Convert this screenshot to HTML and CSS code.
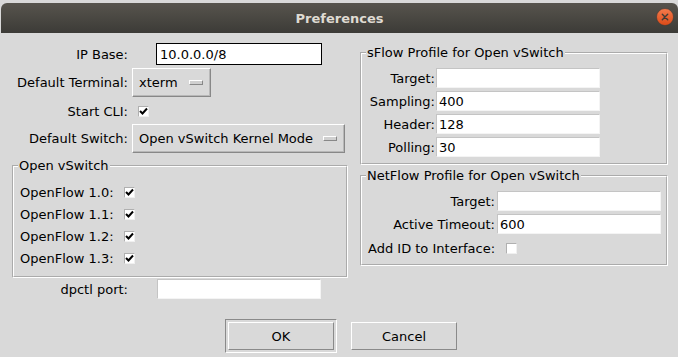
FILE: index.html
```html
<!DOCTYPE html>
<html lang="en">
<head>
    <meta charset="UTF-8">
    <meta name="viewport" content="width=device-width, initial-scale=1.0">
    <title>Preferences</title>
    <link rel="stylesheet" href="styles.css">
</head>
<body>
    <div class="window">
        <div class="titlebar">
            <span class="title">Preferences</span>
            <span class="close">
                <svg width="18" height="18" viewBox="0 0 18 18">
                    <defs>
                        <linearGradient id="closeFill" x1="0" y1="0" x2="0" y2="1">
                            <stop offset="0" stop-color="#f37b4d"/>
                            <stop offset="1" stop-color="#dc4a17"/>
                        </linearGradient>
                    </defs>
                    <circle cx="9" cy="9" r="8.5" fill="url(#closeFill)" stroke="#3a3935" stroke-width="0.6"/>
                    <path d="M6.3 6.3 L11.7 11.7 M11.7 6.3 L6.3 11.7" stroke="#3c3b37" stroke-width="1.4" stroke-linecap="round"/>
                </svg>
            </span>
        </div>

        <div class="dialog">
            <div class="columns">
                <div class="left">
                    <div class="form-grid">
                        <label class="lbl" for="ipBase">IP Base:</label>
                        <input class="entry focus" id="ipBase" type="text" value="10.0.0.0/8">

                        <span class="lbl">Default Terminal:</span>
                        <div class="menubutton short"><span>xterm</span><i class="indicator"></i></div>

                        <span class="lbl">Start CLI:</span>
                        <span class="check cli"><svg width="9" height="9" viewBox="0 0 9 9"><path d="M1 4 L3.5 6.5 L8 1.5" fill="none" stroke="#000" stroke-width="2"/></svg></span>

                        <span class="lbl">Default Switch:</span>
                        <div class="menubutton wide"><span>Open vSwitch Kernel Mode</span><i class="indicator"></i></div>

                        <fieldset class="group ovs">
                            <legend>Open vSwitch</legend>
                            <div class="ovs-grid">
                                <span>OpenFlow 1.0:</span>
                                <span class="check"><svg width="9" height="9" viewBox="0 0 9 9"><path d="M1 4 L3.5 6.5 L8 1.5" fill="none" stroke="#000" stroke-width="2"/></svg></span>
                                <span>OpenFlow 1.1:</span>
                                <span class="check"><svg width="9" height="9" viewBox="0 0 9 9"><path d="M1 4 L3.5 6.5 L8 1.5" fill="none" stroke="#000" stroke-width="2"/></svg></span>
                                <span>OpenFlow 1.2:</span>
                                <span class="check"><svg width="9" height="9" viewBox="0 0 9 9"><path d="M1 4 L3.5 6.5 L8 1.5" fill="none" stroke="#000" stroke-width="2"/></svg></span>
                                <span>OpenFlow 1.3:</span>
                                <span class="check"><svg width="9" height="9" viewBox="0 0 9 9"><path d="M1 4 L3.5 6.5 L8 1.5" fill="none" stroke="#000" stroke-width="2"/></svg></span>
                            </div>
                        </fieldset>

                        <label class="lbl" for="dpctl">dpctl port:</label>
                        <input class="entry" id="dpctl" type="text" value="">
                    </div>
                </div>

                <div class="right">
                    <fieldset class="group sflow">
                        <legend>sFlow Profile for Open vSwitch</legend>
                        <div class="sflow-grid">
                            <span class="lbl">Target:</span><input class="entry" type="text" value="">
                            <span class="lbl">Sampling:</span><input class="entry" type="text" value="400">
                            <span class="lbl">Header:</span><input class="entry" type="text" value="128">
                            <span class="lbl">Polling:</span><input class="entry" type="text" value="30">
                        </div>
                    </fieldset>

                    <fieldset class="group netflow">
                        <legend>NetFlow Profile for Open vSwitch</legend>
                        <div class="netflow-grid">
                            <span class="lbl">Target:</span><input class="entry" type="text" value="">
                            <span class="lbl">Active Timeout:</span><input class="entry" type="text" value="600">
                            <span class="lbl">Add ID to Interface:</span><span class="check addid"></span>
                        </div>
                    </fieldset>
                </div>
            </div>

            <div class="buttons">
                <div class="btn-slot default"><button type="button">OK</button></div>
                <div class="btn-slot"><button type="button">Cancel</button></div>
            </div>
        </div>
    </div>
</body>
</html>
```
FILE: styles.css
```css
body {
    margin: 0;
    background: #d9d9d9;
    font-family: "DejaVu Sans", sans-serif;
    font-size: 13px;
    color: #000;
}

.window {
    width: 678px;
    height: 357px;
    overflow: hidden;
}

/* title bar */
.titlebar {
    display: grid;
    grid-template-columns: 1fr auto 1fr;
    align-items: center;
    height: 30px;
    margin: 3px 0 0 1px;
    border-radius: 6px 6px 0 0;
    background: linear-gradient(#57544d, #3c3b37);
}

.title {
    grid-column: 2;
    color: #dfdbd2;
    font-weight: bold;
    font-size: 13px;
}

.close {
    grid-column: 3;
    justify-self: end;
    display: flex;
    margin: -2px 4px 0 0;
}

/* layout */
.columns {
    display: flex;
    align-items: flex-start;
}

.left {
    width: 336px;
    padding: 10px 0 0 12px;
}

.right {
    width: 308px;
    margin-left: 12px;
    padding-top: 12px;
}

.form-grid {
    display: grid;
    grid-template-columns: 116px 216px;
    grid-template-rows: 22px 34px 24px 30px auto 22px;
    column-gap: 4px;
    align-items: center;
}

.lbl {
    text-align: right;
    white-space: nowrap;
}

/* entries */
.entry {
    box-sizing: border-box;
    justify-self: start;
    width: 164px;
    height: 20px;
    margin: 0 0 0 1px;
    padding: 0 2px;
    font-family: "DejaVu Sans", sans-serif;
    font-size: 13px;
    color: #000;
    background: #fff;
    border: 1px solid;
    border-color: #c4c4c4 #f4f4f4 #f4f4f4 #c4c4c4;
    outline: 1px solid #d9d9d9;
}

.form-grid .entry {
    margin-left: 25px;
}

.entry.focus {
    border-color: #fff;
    outline-color: #000;
}

/* menubuttons */
.menubutton {
    box-sizing: border-box;
    display: flex;
    align-items: center;
    height: 29px;
    padding-left: 6px;
    border: 1px solid;
    border-color: #fff #888 #888 #fff;
    box-shadow: inset -1px -1px 0 #b8b8b8;
}

.menubutton.short {
    width: 79px;
}

.menubutton.wide {
    width: 213px;
}

.indicator {
    box-sizing: border-box;
    width: 14px;
    height: 5px;
    margin: 0 7px 0 auto;
    border: 1px solid;
    border-color: #fff #888 #888 #fff;
    background: #d0d0d0;
}

/* checkbuttons */
.check {
    box-sizing: border-box;
    display: flex;
    align-items: center;
    justify-content: center;
    width: 11px;
    height: 11px;
    background: #fff;
    border: 1px solid;
    border-color: #b0b0b0 #f0f0f0 #f0f0f0 #b0b0b0;
}

.cli {
    margin-left: 6px;
}

/* label frames */
.group {
    margin: 0;
    padding: 0;
    min-width: 0;
    border: 2px groove #fff;
}

.group legend {
    margin-left: 4px;
    padding: 0 1px;
    line-height: 16px;
    white-space: nowrap;
}

.ovs {
    grid-column: 1 / -1;
    margin-top: 5px;
    width: 336px;
    box-sizing: border-box;
}

.ovs-grid {
    display: grid;
    grid-template-columns: 104px auto;
    grid-auto-rows: 22px;
    align-items: center;
    padding: 7px 6px 7px 6px;
}

.sflow-grid {
    display: grid;
    grid-template-columns: 67px 166px;
    grid-auto-rows: 22px;
    row-gap: 1px;
    align-items: center;
    padding: 6px 0 5px 6px;
}

.netflow {
    margin-top: 3px;
}

.netflow-grid {
    display: grid;
    grid-template-columns: 127px 166px;
    grid-template-rows: 22px 22px 24px;
    row-gap: 1px;
    column-gap: 1px;
    align-items: center;
    padding: 6px 0 4px 6px;
}

.addid {
    margin-left: 10px;
}

/* buttons */
.buttons {
    display: flex;
    justify-content: center;
    gap: 11px;
    margin-top: 19px;
    padding-left: 7px;
}

.btn-slot {
    box-sizing: border-box;
    width: 112px;
    height: 34px;
    padding: 2px;
    border: 1px solid transparent;
}

.btn-slot.default {
    border-color: #8a8a8a #fff #fff #8a8a8a;
}

.btn-slot button {
    box-sizing: border-box;
    width: 106px;
    height: 28px;
    margin: 0;
    font-family: "DejaVu Sans", sans-serif;
    font-size: 13px;
    color: #000;
    background: #d9d9d9;
    border: 1px solid;
    border-color: #fff #8a8a8a #8a8a8a #fff;
}
```
